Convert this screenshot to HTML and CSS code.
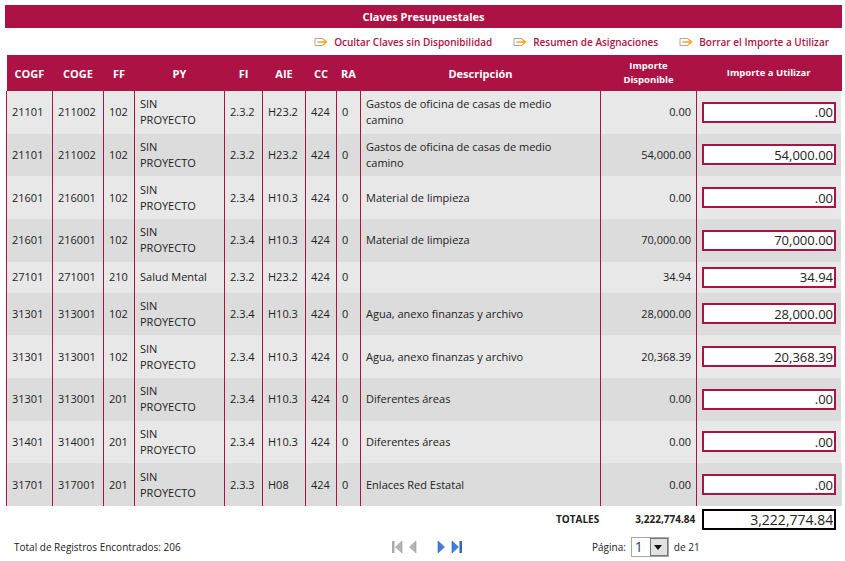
FILE: index.html
```html
<!DOCTYPE html>
<html lang="es">
<head>
    <meta charset="UTF-8">
    <meta name="viewport" content="width=device-width, initial-scale=1.0">
    <title>Claves Presupuestales</title>
    <link rel="stylesheet" href="styles.css">
</head>
<body>
    <svg class="defs" width="0" height="0">
        <symbol id="go" viewBox="0 0 14 10">
            <path d="M9 1.5H1V8.5H9" fill="none" stroke="#a8a8a8" stroke-width="1"/>
            <path d="M3.5 5H12M9 2L12.5 5L9 8" fill="none" stroke="#f5a21b" stroke-width="1.3"/>
        </symbol>
    </svg>
    <div class="page">
        <h1 class="title">Claves Presupuestales</h1>
        <div class="links">
            <a class="link"><svg class="go"><use href="#go"/></svg>Ocultar Claves sin Disponibilidad</a>
            <a class="link"><svg class="go"><use href="#go"/></svg>Resumen de Asignaciones</a>
            <a class="link"><svg class="go"><use href="#go"/></svg>Borrar el Importe a Utilizar</a>
        </div>
        <table class="grid">
            <colgroup>
                <col class="c-cogf"><col class="c-coge"><col class="c-ff"><col class="c-py"><col class="c-fi"><col class="c-aie">
                <col class="c-cc"><col class="c-ra"><col class="c-desc"><col class="c-disp"><col class="c-use">
            </colgroup>
            <thead>
                <tr>
                    <th>COGF</th><th>COGE</th><th>FF</th><th>PY</th><th>FI</th><th>AIE</th><th>CC</th><th>RA</th>
                    <th>Descripción</th>
                    <th class="small">Importe<br>Disponible</th>
                    <th class="small">Importe a Utilizar</th>
                </tr>
            </thead>
            <tbody>
                <tr>
                    <td>21101</td><td>211002</td><td>102</td><td>SIN<br>PROYECTO</td><td>2.3.2</td><td>H23.2</td><td>424</td><td>0</td>
                    <td class="desc">Gastos de oficina de casas de medio camino</td><td class="num">0.00</td>
                    <td class="use"><input class="amount" value=".00"></td>
                </tr>
                <tr>
                    <td>21101</td><td>211002</td><td>102</td><td>SIN<br>PROYECTO</td><td>2.3.2</td><td>H23.2</td><td>424</td><td>0</td>
                    <td class="desc">Gastos de oficina de casas de medio camino</td><td class="num">54,000.00</td>
                    <td class="use"><input class="amount" value="54,000.00"></td>
                </tr>
                <tr>
                    <td>21601</td><td>216001</td><td>102</td><td>SIN<br>PROYECTO</td><td>2.3.4</td><td>H10.3</td><td>424</td><td>0</td>
                    <td class="desc">Material de limpieza</td><td class="num">0.00</td>
                    <td class="use"><input class="amount" value=".00"></td>
                </tr>
                <tr>
                    <td>21601</td><td>216001</td><td>102</td><td>SIN<br>PROYECTO</td><td>2.3.4</td><td>H10.3</td><td>424</td><td>0</td>
                    <td class="desc">Material de limpieza</td><td class="num">70,000.00</td>
                    <td class="use"><input class="amount" value="70,000.00"></td>
                </tr>
                <tr class="short">
                    <td>27101</td><td>271001</td><td>210</td><td>Salud Mental</td><td>2.3.2</td><td>H23.2</td><td>424</td><td>0</td>
                    <td class="desc"></td><td class="num">34.94</td>
                    <td class="use"><input class="amount" value="34.94"></td>
                </tr>
                <tr>
                    <td>31301</td><td>313001</td><td>102</td><td>SIN<br>PROYECTO</td><td>2.3.4</td><td>H10.3</td><td>424</td><td>0</td>
                    <td class="desc">Agua, anexo finanzas y archivo</td><td class="num">28,000.00</td>
                    <td class="use"><input class="amount" value="28,000.00"></td>
                </tr>
                <tr>
                    <td>31301</td><td>313001</td><td>102</td><td>SIN<br>PROYECTO</td><td>2.3.4</td><td>H10.3</td><td>424</td><td>0</td>
                    <td class="desc">Agua, anexo finanzas y archivo</td><td class="num">20,368.39</td>
                    <td class="use"><input class="amount" value="20,368.39"></td>
                </tr>
                <tr>
                    <td>31301</td><td>313001</td><td>201</td><td>SIN<br>PROYECTO</td><td>2.3.4</td><td>H10.3</td><td>424</td><td>0</td>
                    <td class="desc">Diferentes áreas</td><td class="num">0.00</td>
                    <td class="use"><input class="amount" value=".00"></td>
                </tr>
                <tr>
                    <td>31401</td><td>314001</td><td>201</td><td>SIN<br>PROYECTO</td><td>2.3.4</td><td>H10.3</td><td>424</td><td>0</td>
                    <td class="desc">Diferentes áreas</td><td class="num">0.00</td>
                    <td class="use"><input class="amount" value=".00"></td>
                </tr>
                <tr>
                    <td>31701</td><td>317001</td><td>201</td><td>SIN<br>PROYECTO</td><td>2.3.3</td><td>H08</td><td>424</td><td>0</td>
                    <td class="desc">Enlaces Red Estatal</td><td class="num">0.00</td>
                    <td class="use"><input class="amount" value=".00"></td>
                </tr>
            </tbody>
        </table>
        <div class="totals">
            <span class="totals-label">TOTALES</span>
            <span class="totals-value">3,222,774.84</span>
            <input class="amount total-box" value="3,222,774.84">
        </div>
        <div class="footer">
            <span class="records">Total de Registros Encontrados: 206</span>
            <div class="pager">
                <svg class="arrow" viewBox="0 0 12 14"><rect x="1" y="1" width="2.5" height="12" fill="#a9a9a9"/><path d="M11 1V13L4.5 7Z" fill="#b4b4b4" stroke="#999" stroke-width=".6"/></svg>
                <svg class="arrow" viewBox="0 0 12 14"><path d="M9 1V13L2.5 7Z" fill="#b4b4b4" stroke="#999" stroke-width=".6"/></svg>
                <span class="pager-gap"></span>
                <svg class="arrow" viewBox="0 0 12 14"><path d="M3 1V13L9.5 7Z" fill="#3f7fdc" stroke="#2f66bd" stroke-width=".6"/></svg>
                <svg class="arrow" viewBox="0 0 12 14"><path d="M1 1V13L7.5 7Z" fill="#3f7fdc" stroke="#2f66bd" stroke-width=".6"/><rect x="8.5" y="1" width="2.5" height="12" fill="#2f66bd"/></svg>
            </div>
            <div class="paging">
                <span>Página:</span>
                <div class="combo"><span class="combo-value">1</span><span class="combo-btn"></span></div>
                <span>de 21</span>
            </div>
        </div>
    </div>
</body>
</html>
```

FILE: styles.css
```css
body {
    margin: 0;
    background-color: #fff;
    font-family: 'Open Sans', sans-serif;
    font-size: 11px;
    color: #222;
}
.defs {
    position: absolute;
}
.page {
    width: 837px;
    margin: 5px 0 0 5px;
}
.title {
    margin: 0;
    height: 23px;
    line-height: 23px;
    background-color: #ad1245;
    color: #fff;
    text-align: center;
    font-family: 'Open Sans', sans-serif;
    font-size: 11px;
    font-weight: bold;
}
.links {
    display: flex;
    justify-content: flex-end;
    align-items: center;
    gap: 21px;
    height: 27px;
    padding-right: 13px;
}
.link {
    display: flex;
    align-items: center;
    color: #ad1245;
    font-size: 10px;
    font-weight: 600;
}
.go {
    width: 14px;
    height: 10px;
    margin-right: 6px;
}
.grid {
    table-layout: fixed;
    width: 835px;
    margin-left: 1px;
    border-collapse: collapse;
}
.c-cogf { width: 46px; }
.c-coge { width: 51px; }
.c-ff { width: 31px; }
.c-py { width: 90px; }
.c-fi { width: 38px; }
.c-aie { width: 43px; }
.c-cc { width: 31px; }
.c-ra { width: 24px; }
.c-desc { width: 240px; }
.c-disp { width: 96px; }
.c-use { width: 145px; }
.grid th {
    height: 36px;
    padding: 0;
    background-color: #ad1245;
    color: #fff;
    font-size: 11px;
    font-weight: bold;
    text-align: center;
}
.grid th.small {
    font-size: 9.5px;
    line-height: 14px;
}
.grid td {
    height: 42.67px;
    padding: 0 5px;
    border-right: 1px solid #ad1245;
    line-height: 16px;
    overflow: hidden;
}
.grid td:first-child {
    border-left: 1px solid #ad1245;
}
.grid td:last-child {
    border-right: none;
}
.grid tbody tr:nth-child(odd) {
    background-color: #e8e8e8;
}
.grid tbody tr:nth-child(even) {
    background-color: #dcdcdc;
}
.grid tr.short td {
    height: 31px;
}
.grid td.desc {
    padding-left: 5px;
    padding-right: 30px;
}
.grid td.num {
    text-align: right;
}
.grid td.use {
    padding: 0 5px;
}
.amount {
    display: block;
    box-sizing: border-box;
    width: 134px;
    height: 21px;
    padding: 0 1px;
    border: 2px solid #ad1245;
    background: #fff;
    color: #222;
    font-family: 'Open Sans', sans-serif;
    font-size: 13px;
    text-align: right;
}
.totals {
    display: flex;
    align-items: center;
    height: 27px;
}
.totals-label {
    margin-left: 551px;
    font-size: 10px;
    font-weight: bold;
}
.totals-value {
    width: 96px;
    font-size: 10px;
    font-weight: bold;
    text-align: right;
}
.total-box {
    margin-left: 7px;
    border-color: #000;
    font-size: 14px;
}
.footer {
    display: flex;
    align-items: center;
    height: 28px;
    font-size: 10px;
}
.records {
    width: 386px;
    padding-left: 9px;
    box-sizing: border-box;
}
.pager {
    display: flex;
    align-items: center;
    gap: 4px;
    width: 201px;
}
.arrow {
    width: 12px;
    height: 14px;
}
.pager-gap {
    width: 8px;
}
.paging {
    display: flex;
    align-items: center;
    gap: 5px;
}
.combo {
    display: flex;
    box-sizing: border-box;
    width: 38px;
    height: 20px;
    border: 1px solid #a5a5a5;
    background: #fff;
}
.combo-value {
    flex: 1;
    padding-left: 3px;
    color: #1c3f78;
    font-size: 14px;
    line-height: 18px;
}
.combo-btn {
    position: relative;
    width: 16px;
    border: 1px solid #777;
    background: #e2e2e2;
}
.combo-btn::after {
    content: "";
    position: absolute;
    left: 3px;
    top: 6px;
    border-left: 4px solid transparent;
    border-right: 4px solid transparent;
    border-top: 5px solid #111;
}
```
